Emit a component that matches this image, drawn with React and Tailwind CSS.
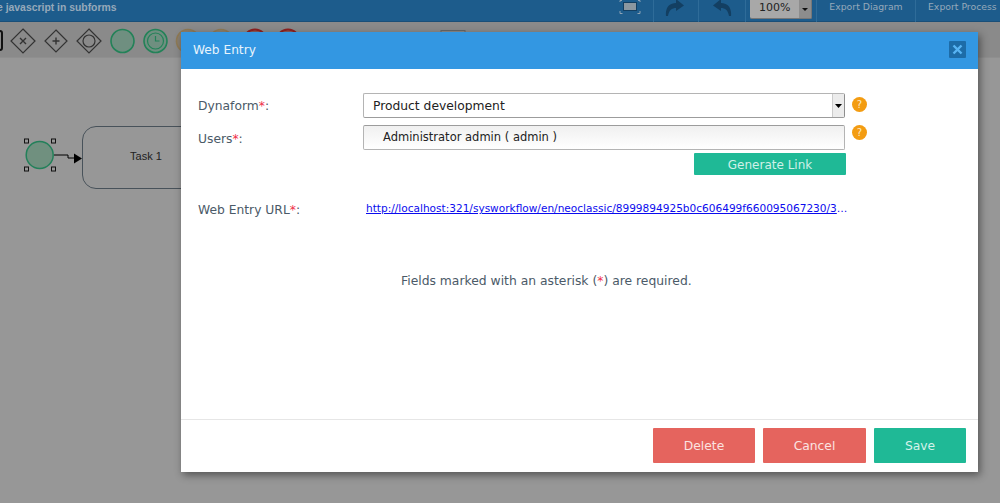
const font = { fontFamily: '"DejaVu Sans", sans-serif' };

function Req() {
  return <span className="text-[#f0304a]">*</span>;
}

function Hint() {
  return (
    <span className="flex h-[15px] w-[15px] items-center justify-center rounded-full bg-[#f39c12] text-[10px] leading-none text-[#fde9c4]">?</span>
  );
}

function Separator() {
  return <div className="h-[22px] w-px shrink-0 bg-[#2f6c99]" />;
}

function ToolbarIcons() {
  return (
    <svg width="480" height="36" viewBox="0 0 480 36" className="block">
      <rect x="-8" y="9" width="10" height="19" rx="2" fill="none" stroke="#111" strokeWidth="2" />
      <g fill="none" stroke="#333" strokeWidth="1.2">
        <path d="M23 7 L35 19 L23 31 L11 19 Z" />
        <path d="M20 16 L26 22 M26 16 L20 22" strokeWidth="1.400" />
        <path d="M56 8 L67 19 L56 30 L45 19 Z" />
        <path d="M56 15.500 V22.500 M52.500 19 H59.500" strokeWidth="1.400" />
        <path d="M89 7 L101 19 L89 31 L77 19 Z" />
        <circle cx="89" cy="19" r="6" />
      </g>
      <circle cx="122.500" cy="19" r="11.500" fill="#6f8f80" stroke="#238258" strokeWidth="1.600" />
      <circle cx="155.500" cy="19" r="11.500" fill="#6f8f80" stroke="#238258" strokeWidth="1.600" />
      <circle cx="155.500" cy="19" r="8" fill="none" stroke="#238258" strokeWidth="1.200" />
      <path d="M155.500 14 V19 H159.500" fill="none" stroke="#238258" strokeWidth="1.200" />
      <circle cx="188" cy="19" r="11.500" fill="#8a8072" stroke="#8f7a55" strokeWidth="1.600" />
      <circle cx="221" cy="19" r="11.500" fill="#8a8072" stroke="#8f7a55" strokeWidth="1.600" />
      <circle cx="255" cy="19" r="11.500" fill="#8a5a5a" stroke="#8e2020" strokeWidth="2" />
      <circle cx="288" cy="19" r="11.500" fill="#8a5a5a" stroke="#8e2020" strokeWidth="2" />
      <circle cx="353" cy="21" r="9" fill="#8a8a8a" stroke="#555" strokeWidth="1.600" />
      <rect x="441" y="8.500" width="24" height="20" fill="#8a8a8a" stroke="#666" />
    </svg>
  );
}

function Background() {
  return (
    <div className="flex h-[503px] w-[1000px] flex-col bg-[#979797]">
      <header className="flex h-[22px] shrink-0 items-start justify-between border-b border-[#1a4f78] bg-[#1d5c8c] text-[#96a9ba]">
        <div className="ml-[-3px] text-[10.400px] leading-[15px] font-bold whitespace-nowrap" style={{ fontFamily: '"Liberation Sans", sans-serif' }}>
          e javascript in subforms
        </div>
        <div className="flex h-[22px] items-start text-[9.300px] leading-[13px]" style={font}>
          <svg width="22" height="16" viewBox="0 0 22 16" className="mr-[12px]">
            <rect x="4.500" y="2.500" width="13" height="8" fill="#8b97a0" stroke="#133f62" />
            <path d="M1 11 V13.500 H3.500 M18.500 13.500 H21 V11 M1 2 V0.500 H3 M19 0.500 H21 V2" fill="none" stroke="#8ea3b5" />
          </svg>
          <Separator />
          <svg width="44" height="22" viewBox="0 0 44 22" className="shrink-0">
            <path d="M12 16 C11 7 16 3 22 3 V-1 L30 5.500 L22 11 V8 C18 8 15 10 14 16 Z" fill="#133f62" />
          </svg>
          <Separator />
          <svg width="46" height="22" viewBox="0 0 46 22" className="shrink-0">
            <path d="M32 16 C33 7 28 3 22 3 V-1 L14 5.500 L22 11 V8 C26 8 29 10 30 16 Z" fill="#133f62" />
          </svg>
          <Separator />
          <div className="mx-[4px] flex h-[19px] w-[62px] shrink-0 items-start justify-between rounded-b-[2px] border-r border-b border-[#777] bg-[#a8a8a8] pl-[9px] text-[11px] leading-[15px] text-[#222]">
            <span>100%</span>
            <span className="flex h-[18px] w-[12px] items-center justify-center bg-[#8d8d8d]">
              <svg width="6" height="3" viewBox="0 0 6 3"><path d="M0 0 H6 L3 3 Z" fill="#111" /></svg>
            </span>
          </div>
          <Separator />
          <div className="w-[98px] shrink-0 text-center">Export Diagram</div>
          <Separator />
          <div className="ml-[12px] w-[72px] whitespace-nowrap">Export Process</div>
        </div>
      </header>
      <div className="h-[36px] shrink-0 overflow-hidden border-b border-[#8f8f8f] bg-[#8a8a8a]">
        <ToolbarIcons />
      </div>
      <div className="flex-1">
        <div className="ml-[24px] mt-[68px] flex items-start">
          <svg width="58" height="38" viewBox="0 0 58 38" className="mt-[12px] shrink-0">
            <circle cx="15.700" cy="17" r="13.500" fill="#70907f" stroke="#23805a" strokeWidth="1.500" />
            <g fill="#979797" stroke="#111" strokeWidth="1">
              <rect x="0.500" y="1" width="4" height="4" />
              <rect x="27.500" y="1" width="4" height="4" />
              <rect x="0.500" y="29" width="4" height="4" />
              <rect x="27.500" y="29" width="4" height="4" />
            </g>
            <path d="M30 17 H44 V20 H50" fill="none" stroke="#000" strokeWidth="1" />
            <path d="M50 15.500 L58 20.500 L50 25.500 Z" fill="#000" />
          </svg>
          <div className="flex h-[63px] w-[130px] shrink-0 items-center justify-center rounded-[14px] border border-[#48525a] pr-[2px] pb-[2px] text-[11px] text-[#222]" style={{ fontFamily: '"Liberation Sans", sans-serif' }}>
            Task 1
          </div>
        </div>
      </div>
    </div>
  );
}

export default function App() {
  return (
    <div className="relative h-[503px] w-[1000px] overflow-hidden" style={font}>
      <Background />
      <div className="absolute left-[181px] top-[32px] flex h-[440px] w-[797px] flex-col bg-white shadow-[2px_3px_8px_rgba(0,0,0,0.45)]">
        <div className="flex h-[37px] shrink-0 items-center justify-between bg-[#3397e2] pl-[12px] pr-[12px] text-[12.200px] text-[#e8f4fc]">
          <span>Web Entry</span>
          <span className="mb-[3px] flex h-[17px] w-[17px] items-center justify-center rounded-[1px] bg-[#1d6ca8]">
            <svg width="11" height="11" viewBox="0 0 11 11">
              <path d="M1.500 1.500 L9.500 9.500 M9.500 1.500 L1.500 9.500" stroke="#58b4f4" strokeWidth="2.400" />
            </svg>
          </span>
        </div>
        <div className="flex-1 pl-[17px] pt-[24px] text-[12.300px] text-[#4b5a68]">
          <div className="flex h-[25px] items-center">
            <label className="w-[165px] shrink-0 pt-[2px]">Dynaform<Req />:</label>
            <div className="flex h-[25px] w-[482px] items-center justify-between rounded-[2px] border border-[#b4b4b4] border-r-[#8e8e8e] border-b-[#9c9c9c] pl-[9px] text-[#222]">
              <span className="pt-[1px]">Product development</span>
              <span className="flex h-[23px] w-[12px] items-center justify-center border-l border-[#ccc] bg-[#ececec]">
                <svg width="7" height="4" viewBox="0 0 7 4"><path d="M0 0 H7 L3.500 4 Z" fill="#000" /></svg>
              </span>
            </div>
            <span className="mb-[2px] ml-[7px]"><Hint /></span>
          </div>
          <div className="mt-[7px] flex h-[25px] items-center">
            <label className="w-[165px] shrink-0 pt-[4px]">Users<Req />:</label>
            <div className="flex h-[25px] w-[482px] items-center rounded-[2px] border border-[#b4b4b4] border-t-[#9c9c9c] bg-gradient-to-b from-[#f0f0f0] to-white pl-[19px] text-[11.500px] text-[#222]">
              Administrator admin ( admin )
            </div>
            <span className="mb-[10px] ml-[7px]"><Hint /></span>
          </div>
          <div className="mt-[3px] flex w-[648px] justify-end">
            <button className="h-[22px] w-[152px] rounded-[1px] bg-[#1fb996] pt-[1px] text-[12px] text-[#d0f0e8]">Generate Link</button>
          </div>
          <div className="mt-[23px] flex h-[20px] items-center">
            <label className="w-[168px] shrink-0 pt-[4px]">Web Entry URL<Req />:</label>
            <a href="#" className="w-[484px] truncate pt-[2px] text-[10.550px] text-[#0b0bee] underline">
              http://localhost:321/sysworkflow/en/neoclassic/8999894925b0c606499f660095067230/3c3a5e8d5b0c606b1c4ac9b095067230.php
            </a>
          </div>
          <p className="mt-[54px] pl-[203px] text-[12.350px] text-[#4b5a68]">
            Fields marked with an asterisk (<Req />) are required.
          </p>
        </div>
        <div className="flex h-[53px] shrink-0 items-start justify-end gap-[8px] border-t border-[#e6e6e6] pr-[12px] pt-[8px] text-[12.300px] text-[#fbe3e1]">
          <button className="h-[35px] w-[102px] rounded-[1px] bg-[#e5645e] pt-[1px]">Delete</button>
          <button className="h-[35px] w-[103px] rounded-[1px] bg-[#e5645e] pt-[1px]">Cancel</button>
          <button className="h-[35px] w-[92px] rounded-[1px] bg-[#1fb996] pt-[1px] text-[#d5f2ea]">Save</button>
        </div>
      </div>
    </div>
  );
}
